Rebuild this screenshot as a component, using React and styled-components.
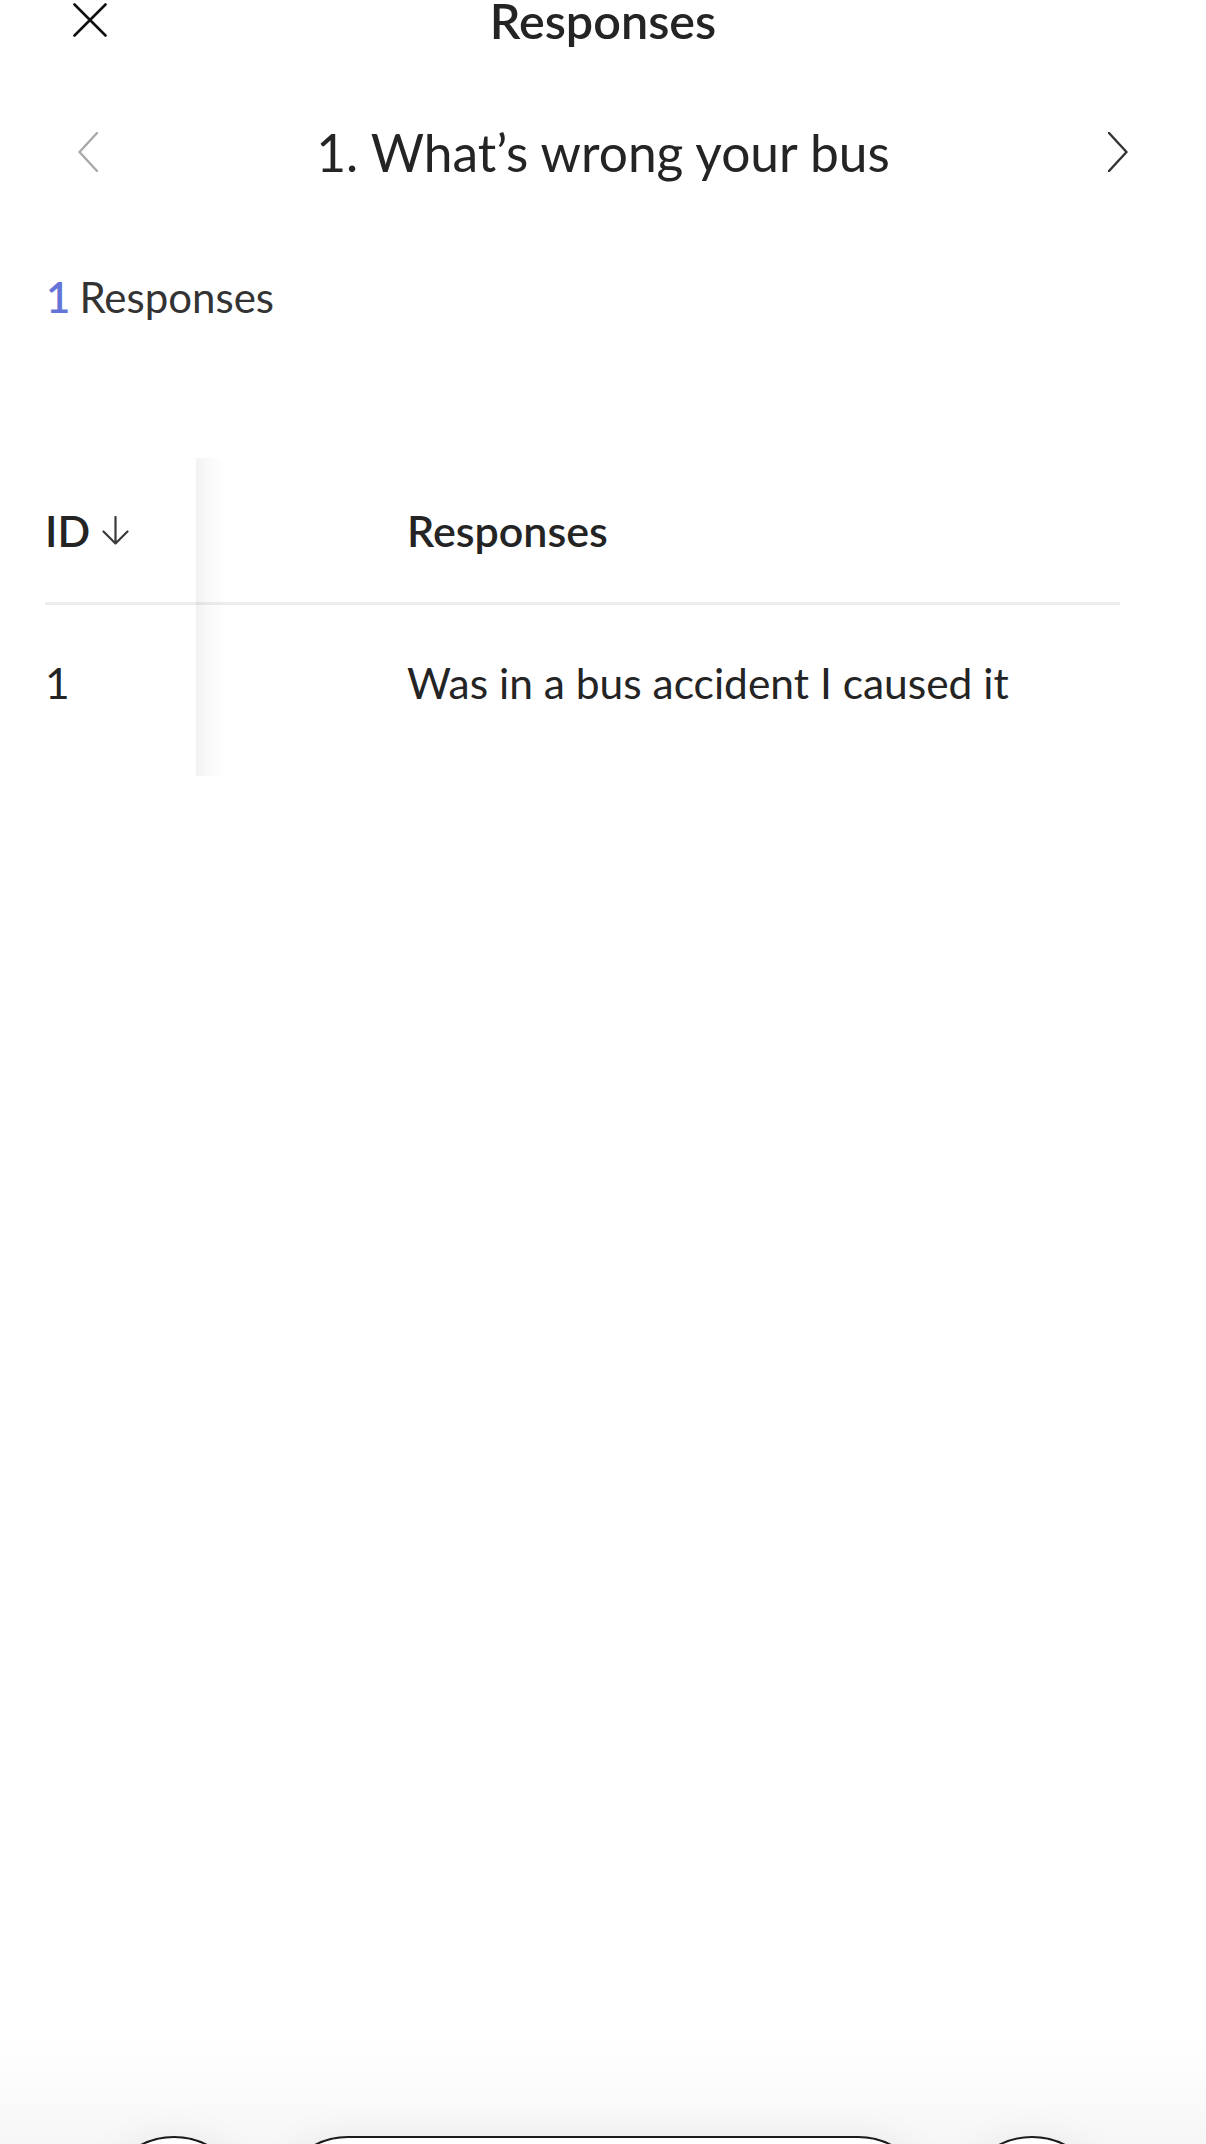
import React from "react";
import styled, { createGlobalStyle } from "styled-components";

const GlobalStyle = createGlobalStyle`
  html, body {
    margin: 0;
    padding: 0;
    background: #ffffff;
  }
  body {
    font-family: "Lato", "Open Sans", "Noto Sans", sans-serif;
    color: #242424;
    -webkit-font-smoothing: antialiased;
  }
  * { box-sizing: border-box; }
`;

const Page = styled.div`
  width: 1206px;
  height: 2144px;
  overflow: hidden;
  display: flex;
  flex-direction: column;
  background: #fff;
`;

const Header = styled.header`
  margin-top: -8px;
  height: 56px;
  display: grid;
  grid-template-columns: 1fr auto 1fr;
  align-items: center;
  flex-shrink: 0;
`;

const CloseButton = styled.button`
  justify-self: start;
  margin-left: 73px;
  width: 34px;
  height: 34px;
  padding: 0;
  border: 0;
  background: none;
  display: flex;
  align-items: center;
  justify-content: center;
  color: #111;
`;

const Title = styled.h1`
  margin: 0;
  font-size: 48.5px;
  font-weight: 600;
  line-height: 56px;
  letter-spacing: 0;
  color: #242424;
`;

const QuestionNav = styled.div`
  margin-top: 64px;
  height: 80px;
  padding: 0 78px;
  display: flex;
  align-items: center;
  justify-content: space-between;
  flex-shrink: 0;
`;

const NavButton = styled.button`
  width: 20px;
  height: 40px;
  padding: 0;
  border: 0;
  background: none;
  display: flex;
  align-items: center;
  justify-content: center;
  color: ${(p) => (p.$disabled ? "#a9a9a9" : "#333333")};
`;

const Question = styled.h2`
  margin: 0;
  font-size: 51.5px;
  font-weight: 400;
  line-height: 80px;
  color: #242424;
`;

const Count = styled.div`
  margin-top: 77px;
  height: 56px;
  padding-left: 46px;
  display: flex;
  align-items: center;
  gap: 9px;
  font-size: 42px;
  line-height: 56px;
  color: #333;
  flex-shrink: 0;
`;

const CountNumber = styled.span`
  color: #6474d8;
  font-weight: 600;
`;

const Table = styled.div`
  position: relative;
  margin-top: 133px;
  margin-left: 45px;
  width: 1075px;
  padding-bottom: 17px;
  display: grid;
  grid-template-columns: 151px 1fr;
  flex-shrink: 0;
`;

const FrozenShadow = styled.div`
  position: absolute;
  left: 151px;
  top: 0;
  bottom: 0;
  width: 32px;
  background: linear-gradient(
    to right,
    rgba(0, 0, 0, 0.05),
    rgba(0, 0, 0, 0.02) 40%,
    rgba(0, 0, 0, 0)
  );
  pointer-events: none;
`;

const HeadCell = styled.div`
  height: 147px;
  border-bottom: 3px solid #ececec;
  display: flex;
  align-items: center;
  gap: 12px;
  padding-left: ${(p) => (p.$wide ? "211px" : "0px")};
  font-size: 43px;
  font-weight: 600;
  color: #242424;
`;

const Cell = styled.div`
  height: 154px;
  display: flex;
  align-items: center;
  padding-left: ${(p) => (p.$wide ? "211px" : "0px")};
  font-size: 42.5px;
  font-weight: 400;
  color: #242424;
`;

const Spacer = styled.div`
  flex: 1;
`;

const BottomBar = styled.div`
  flex-shrink: 0;
  margin-bottom: -136px;
  padding-top: 96px;
  background: linear-gradient(
    to bottom,
    rgba(255, 255, 255, 0),
    #f6f6f6 45%,
    #f1f1f1
  );
  display: flex;
  justify-content: center;
  gap: 30px;
`;

const RoundButton = styled.div`
  width: 144px;
  height: 144px;
  border-radius: 50%;
  border: 2px solid #1c1c1c;
  background: #fff;
  box-shadow: 0 0 40px rgba(0, 0, 0, 0.06);
`;

const PillButton = styled.div`
  width: 654px;
  height: 144px;
  border-radius: 72px;
  border: 2px solid #1c1c1c;
  background: #fff;
  box-shadow: 0 0 40px rgba(0, 0, 0, 0.06);
`;

const CloseIcon = () => (
  <svg width="34" height="34" viewBox="0 0 34 34" fill="none">
    <path d="M1.5 1.5 L32.5 32.5 M32.5 1.5 L1.5 32.5" stroke="currentColor" strokeWidth="2.6" strokeLinecap="round" />
  </svg>
);

const Chevron = ({ dir }) => (
  <svg width="20" height="40" viewBox="0 0 20 40" fill="none">
    {dir === "left" ? (
      <path d="M19 1 L1.5 20 L19 39" stroke="currentColor" strokeWidth="2.4" strokeLinecap="round" strokeLinejoin="round" />
    ) : (
      <path d="M1 1 L18.5 20 L1 39" stroke="currentColor" strokeWidth="2.4" strokeLinecap="round" strokeLinejoin="round" />
    )}
  </svg>
);

const SortDown = () => (
  <svg width="27" height="29" viewBox="0 0 27 29" fill="none">
    <path d="M13.5 1 V27.5 M1.5 15.5 L13.5 27.5 L25.5 15.5" stroke="#3a3a3a" strokeWidth="2.2" strokeLinecap="round" strokeLinejoin="round" />
  </svg>
);

const rows = [{ id: 1, response: "Was in a bus accident I caused it" }];

export default function App() {
  return (
    <>
      <GlobalStyle />
      <Page>
        <Header>
          <CloseButton aria-label="Close">
            <CloseIcon />
          </CloseButton>
          <Title>Responses</Title>
          <span />
        </Header>

        <QuestionNav>
          <NavButton $disabled aria-label="Previous question">
            <Chevron dir="left" />
          </NavButton>
          <Question>1. What’s wrong your bus</Question>
          <NavButton aria-label="Next question">
            <Chevron dir="right" />
          </NavButton>
        </QuestionNav>

        <Count>
          <CountNumber>1</CountNumber>
          <span>Responses</span>
        </Count>

        <Table>
          <HeadCell>
            ID <SortDown />
          </HeadCell>
          <HeadCell $wide>Responses</HeadCell>
          {rows.map((r) => (
            <React.Fragment key={r.id}>
              <Cell>{r.id}</Cell>
              <Cell $wide>{r.response}</Cell>
            </React.Fragment>
          ))}
          <FrozenShadow />
        </Table>

        <Spacer />

        <BottomBar>
          <RoundButton />
          <PillButton />
          <RoundButton />
        </BottomBar>
      </Page>
    </>
  );
}
